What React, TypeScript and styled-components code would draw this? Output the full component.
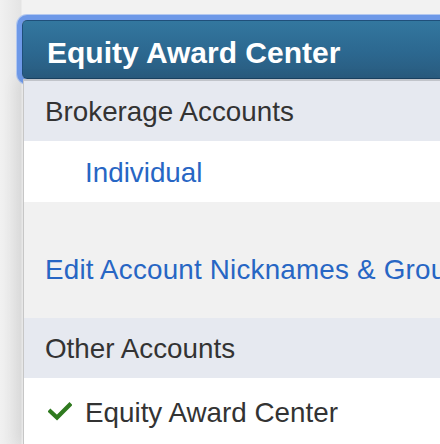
import styled, { createGlobalStyle } from "styled-components";

const GlobalStyle = createGlobalStyle`
    html, body {
        margin: 0;
        padding: 0;
        overflow: hidden;
        background: linear-gradient(90deg, #f1f1f1 0px, #e4e4e4 21px, #f2f2f2 22px);
        font-family: "Liberation Sans", Arial, sans-serif;
    }
    * { box-sizing: border-box; }
`;

const CheckIcon = () => (
    <svg width="24" height="19" viewBox="0 0 24 19" aria-hidden="true">
        <path d="M2.5 9.5 L9 15.5 L21.5 3" fill="none" stroke="#2f7a1f" strokeWidth="4.2" strokeLinecap="square" />
    </svg>
);

const App = () => {
    return (
        <>
            <GlobalStyle />
            <Page>
                <AccountButton type="button">Equity Award Center</AccountButton>

                <Panel>
                    <GroupHeader>Brokerage Accounts</GroupHeader>
                    <AccountRow>
                        <AccountLink>Individual</AccountLink>
                    </AccountRow>

                    <EditArea>
                        <EditLink>Edit Account Nicknames &amp; Groups</EditLink>
                    </EditArea>

                    <GroupHeader>Other Accounts</GroupHeader>
                    <AccountRow $selected>
                        <CheckIcon />
                        <AccountName>Equity Award Center</AccountName>
                    </AccountRow>
                </Panel>
            </Page>
        </>
    );
};

export default App;

const Page = styled.div`
    width: 440px;
    height: 444px;
    padding: 20px 0 0 22px;
    display: flex;
    flex-direction: column;
    overflow: hidden;
`;

const AccountButton = styled.button`
    width: 460px;
    flex-shrink: 0;
    margin: 0;
    padding: 17px 24px 10px;
    text-align: left;
    font-family: "Liberation Sans", Arial, sans-serif;
    font-size: 30px;
    line-height: 30px;
    font-weight: bold;
    color: #ffffff;
    background: linear-gradient(180deg, #33779f 0%, #2c6890 55%, #295b7e 100%);
    border: 1px solid #1f4f7a;
    border-bottom-color: #1a4262;
    border-radius: 5px;
    box-shadow: 0 0 0 5px #6e99e8, 0 0 0 6px #b3c8f0;
    white-space: nowrap;
`;

const Panel = styled.div`
    position: relative;
    z-index: 1;
    margin-left: 1px;
    flex: 1;
    display: flex;
    flex-direction: column;
    border-left: 1px solid #c6c6c6;
    border-top: 2px solid #c1c4ca;
    background: #f1f1f1;
    box-shadow: -8px 0 14px rgba(0, 0, 0, 0.05);
    white-space: nowrap;
`;

const GroupHeader = styled.div`
    height: 60px;
    padding: 15px 21px 13px;
    font-size: 27.8px;
    line-height: 32px;
    color: #333333;
    background: #e6e9f0;
`;

const AccountRow = styled.div<{ $selected?: boolean }>`
    display: flex;
    align-items: center;
    gap: 13px;
    height: ${({ $selected }) => ($selected ? "66px" : "61px")};
    padding: 0 0 0 ${({ $selected }) => ($selected ? "24px" : "61px")};
    background: #ffffff;

    svg {
        flex-shrink: 0;
        margin-top: 1px;
    }
`;

const AccountLink = styled.span`
    font-size: 27.8px;
    line-height: 32px;
    color: #2766c4;
    margin-top: 2px;
`;

const AccountName = styled.span`
    font-size: 27.8px;
    line-height: 32px;
    color: #333333;
    margin-top: 3px;
`;

const EditArea = styled.div`
    height: 116px;
    padding: 52px 21px 0;
`;

const EditLink = styled.span`
    font-size: 27.8px;
    line-height: 32px;
    letter-spacing: 0.2px;
    color: #2766c4;
`;
